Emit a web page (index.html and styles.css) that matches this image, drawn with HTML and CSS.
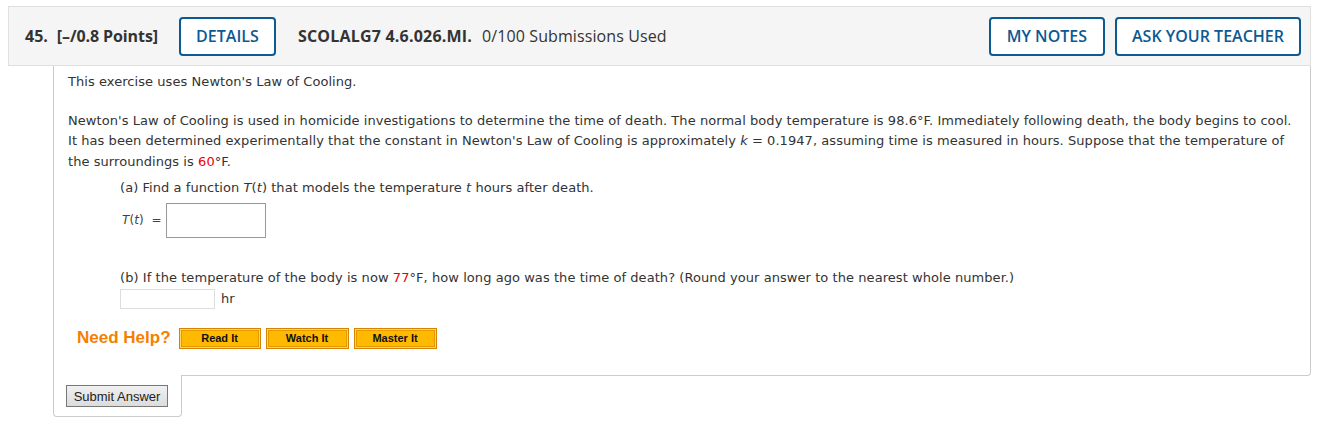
FILE: index.html
```html
<!DOCTYPE html>
<html>
<head>
<meta charset="utf-8">
<link rel="stylesheet" href="styles.css">
</head>
<body>
<div class="question">
  <div class="qhead">
    <span class="qnum">45.</span>
    <span class="qpts">[–/0.8 Points]</span>
    <button class="obtn details">DETAILS</button>
    <span class="qid">SCOLALG7 4.6.026.MI.</span>
    <span class="qsub">0/100 Submissions Used</span>
    <span class="spacer"></span>
    <button class="obtn">MY NOTES</button>
    <button class="obtn">ASK YOUR TEACHER</button>
  </div>
  <div class="qbody">
    <p class="intro">This exercise uses Newton's Law of Cooling.</p>
    <p class="para">Newton's Law of Cooling is used in homicide investigations to determine the time of death. The normal body temperature is 98.6°F. Immediately following death, the body begins to cool. It has been determined experimentally that the constant in Newton's Law of Cooling is approximately <i>k</i> = 0.1947, assuming time is measured in hours. Suppose that the temperature of the surroundings is <span class="red">60</span>°F.</p>
    <div class="part">
      <p class="ptext">(a) Find a function <i>T</i>(<i>t</i>) that models the temperature <i>t</i> hours after death.</p>
      <div class="arow"><span class="lbl"><i>T</i>(<i>t</i>) &nbsp;=</span><span class="bigbox"></span></div>
      <p class="ptext pb">(b) If the temperature of the body is now <span class="red">77</span>°F, how long ago was the time of death? (Round your answer to the nearest whole number.)</p>
      <div class="brow"><span class="smallbox"></span><span class="unit">hr</span></div>
    </div>
    <div class="help">
      <span class="needhelp">Need Help?</span>
      <button class="hbtn">Read It</button>
      <button class="hbtn">Watch It</button>
      <button class="hbtn">Master It</button>
    </div>
  </div>
  <div class="tab"><button class="submit">Submit Answer</button></div>
</div>
</body>
</html>
```

FILE: styles.css
```css
* { box-sizing: border-box; }
body {
  margin: 0;
  padding: 6px 9px 0 8px;
  background: #fff;
  font-family: "DejaVu Sans", Verdana, sans-serif;
  color: #333;
}
.qhead {
  display: flex;
  align-items: center;
  height: 60px;
  background: #f5f5f5;
  border: 1px solid #e0e0e0;
  padding: 0 9px 0 16px;
  font-family: "Open Sans", sans-serif;
  font-size: 16px;
  color: #333;
}
.qnum { font-weight: 700; margin-right: 9px; }
.qpts { font-weight: 700; margin-right: 21px; letter-spacing: -0.1px; }
.qid { font-weight: 700; margin-left: 22px; margin-right: 10px; letter-spacing: 0.2px; }
.qsub { font-weight: 400; letter-spacing: 0.1px; }
.spacer { flex: 1; }
.obtn {
  font-family: "Open Sans", sans-serif;
  font-size: 16px;
  font-weight: 600;
  color: #0b5a94;
  background: #fff;
  border: 2px solid #0b5a94;
  border-radius: 4px;
  height: 39px;
  padding: 0 16px;
  margin-left: 10px;
}
.obtn.details { margin-left: 0; width: 97px; padding: 0; }
.qhead .obtn:last-child { width: 186px; padding: 0; }
.qbody {
  margin-left: 45px;
  border-left: 1px solid #ccc;
  border-right: 1px solid #ccc;
  border-bottom: 1px solid #ccc;
  border-bottom-right-radius: 4px;
  padding: 6px 14px 26px 14px;
  font-size: 13px;
  line-height: 20.5px;
  letter-spacing: 0.06px;
}
p { margin: 0; }
.intro { margin-bottom: 18px; }
.para { margin-bottom: 7px; }
.red { color: #e00; }
.part { padding-left: 52px; }
.ptext:first-child { margin-top: -1px; }
.arow { display: flex; align-items: center; margin-top: 4px; height: 35px; }
.lbl { margin-left: 2px; margin-right: 4px; font-size: 12px; color: #444; }
.bigbox { width: 100px; height: 35px; border: 1px solid #999; background: #fff; }
.pb { margin-top: 30px; }
.brow { display: flex; align-items: center; margin-top: 1px; height: 20px; }
.smallbox { width: 95px; height: 20px; border: 1px solid #ddd; background: #fff; }
.unit { margin-left: 6px; }
.help { display: flex; align-items: center; margin-top: 18px; padding-left: 9px; height: 22px; letter-spacing: 0; }
.needhelp {
  font-family: "Liberation Sans", Arial, sans-serif;
  font-weight: 700;
  font-size: 17px;
  color: #f57f00;
  margin-right: 8px;
}
.hbtn {
  font-family: "Liberation Sans", Arial, sans-serif;
  font-weight: 700;
  font-size: 11px;
  color: #111;
  background: #ffba00;
  border: 1px solid #d98200;
  box-shadow: inset 0 0 0 1px #ffd766, inset 0 0 0 2px #e59a00;
  height: 21px;
  width: 83px;
  padding: 0;
  margin-right: 5px;
}
.hbtn:first-of-type { width: 82px; }
.tab {
  width: 129px;
  height: 42px;
  margin-left: 45px;
  margin-top: -1px;
  background: #fff;
  border-left: 1px solid #ccc;
  border-right: 1px solid #ccc;
  border-bottom: 1px solid #ccc;
  border-radius: 0 0 4px 4px;
  padding: 10px 0 0 12px;
}
.submit {
  font-family: "Liberation Sans", Arial, sans-serif;
  font-size: 13px;
  color: #222;
  background: linear-gradient(#f0f0f0, #dcdcdc);
  border: 1px solid #777;
  height: 22px;
  width: 102px;
  padding: 0;
}
```
